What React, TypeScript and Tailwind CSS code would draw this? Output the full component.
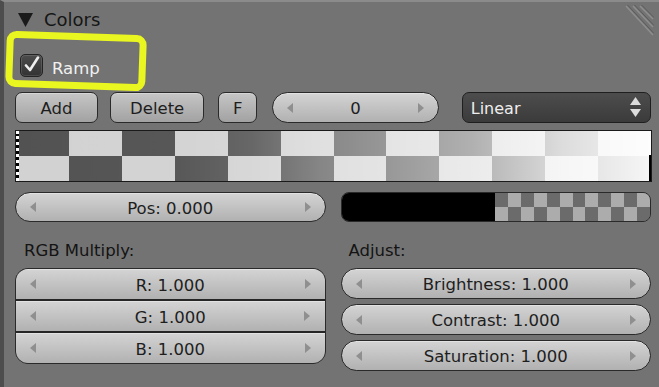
import type { ReactNode } from 'react'

const font = "font-['DejaVu_Sans','Liberation_Sans',sans-serif]"

// row-major for a 12 x 2 checker, top-left dark
const rampCells = Array.from({ length: 24 }, (_, i) => (Math.floor(i / 12) + (i % 12)) % 2 === 0)
const swatchCells = Array.from({ length: 24 }, (_, i) => (Math.floor(i / 12) + (i % 12)) % 2 === 0)

function ArrowL(): React.JSX.Element {
  return (
    <svg width="6" height="10" viewBox="0 0 6 10" className="shrink-0">
      <polygon points="6,0 0,5 6,10" fill="#8f8f8f" />
    </svg>
  )
}

function ArrowR(): React.JSX.Element {
  return (
    <svg width="6" height="10" viewBox="0 0 6 10" className="shrink-0">
      <polygon points="0,0 6,5 0,10" fill="#8f8f8f" />
    </svg>
  )
}

/** 블렌더 숫자 필드 — 양쪽 화살표 + 가운데 값 */
function NumField({ label, className }: { label: string; className: string }): React.JSX.Element {
  return (
    <div
      className={
        'flex items-center justify-between bg-gradient-to-b from-[#d4d4d4] to-[#b1b1b1] px-[14px] text-[16.5px] leading-[19px] text-[#1e1e1e] shadow-[inset_0_1px_0_rgba(255,255,255,0.35)] ' +
        className
      }
    >
      <ArrowL />
      <span className="pt-[2px]">{label}</span>
      <ArrowR />
    </div>
  )
}

function Button({ w, children }: { w: string; children: ReactNode }): React.JSX.Element {
  return (
    <div
      className={
        'flex h-[31px] items-center justify-center rounded-[7px] border border-[#2a2a2a] bg-gradient-to-b from-[#c6c6c6] to-[#a2a2a2] pt-[2px] text-[16.5px] leading-[19px] text-[#1e1e1e] shadow-[inset_0_1px_0_rgba(255,255,255,0.3)] ' +
        w
      }
    >
      {children}
    </div>
  )
}

export default function App(): React.JSX.Element {
  return (
    <div
      className={`${font} relative flex h-[387px] w-[659px] flex-col overflow-hidden border-l-4 border-t-2 border-l-[#4d4d4d] border-t-[#8b8b8b] bg-[#737373] pl-[11px] pr-[8px]`}
    >
      {/* 패널 헤더 */}
      <div className="mt-[7px] flex h-[21px] items-center">
        <svg width="15" height="14" viewBox="0 0 15 14" className="ml-[3px]">
          <polygon points="0,0 15,0 7.5,14" fill="#1a1a1a" />
        </svg>
        <span className="ml-[11px] text-[18px] leading-[21px] text-[#161616]">Colors</span>
      </div>

      {/* 리사이즈 그립 */}
      <svg width="30" height="32" viewBox="0 0 30 32" className="absolute right-[5px] top-[3px]">
        <line x1="2" y1="1" x2="29" y2="30" stroke="#8e8e8e" strokeWidth="1.5" />
        <line x1="3.5" y1="0" x2="30" y2="28.5" stroke="#5c5c5c" strokeWidth="1" />
        <line x1="9" y1="1" x2="29" y2="22" stroke="#8e8e8e" strokeWidth="1.5" />
        <line x1="10.5" y1="0" x2="30" y2="20.5" stroke="#5c5c5c" strokeWidth="1" />
        <line x1="16" y1="1" x2="29" y2="14" stroke="#8e8e8e" strokeWidth="1.5" />
        <line x1="17.5" y1="0" x2="30" y2="12.5" stroke="#5c5c5c" strokeWidth="1" />
      </svg>

      {/* 체크박스 Ramp */}
      <div className="mt-[24px] flex h-[23px] items-center">
        <div className="ml-[5px] flex size-[23px] items-center justify-center rounded-[5px] border border-[#242424] bg-gradient-to-b from-[#4c4c4c] to-[#333333] shadow-[inset_0_0_0_1px_rgba(255,255,255,0.12)]">
          <svg width="19" height="19" viewBox="0 0 19 19">
            <polyline
              points="4,9.5 8,14 16,1.5"
              fill="none"
              stroke="#efefef"
              strokeWidth="2.6"
              strokeLinecap="round"
              strokeLinejoin="round"
            />
          </svg>
        </div>
        <span className="ml-[9px] mt-[5px] text-[16.5px] leading-[19px] text-[#f1f1f1]">Ramp</span>
      </div>

      {/* 노란 강조 테두리 */}
      <div className="absolute left-[2px] top-[31px] h-[56px] w-[140px] rotate-[2deg] rounded-[10px] border-[7px] border-[#e9f61f]" />

      {/* 버튼 줄 */}
      <div className="mt-[15px] flex items-center">
        <Button w="w-[84px]">Add</Button>
        <div className="ml-[12px]">
          <Button w="w-[94px]">Delete</Button>
        </div>
        <div className="ml-[14px]">
          <Button w="w-[39px]">F</Button>
        </div>
        <NumField
          label="0"
          className="ml-[15px] h-[31px] w-[168px] rounded-full border border-[#2a2a2a]"
        />
        <div className="ml-[23px] flex h-[31px] w-[191px] items-center justify-between rounded-[7px] border border-[#1f1f1f] bg-gradient-to-b from-[#4d4d4d] to-[#3b3b3b] pl-[8px] pr-[9px] text-[16px] leading-[19px] text-[#eeeeee]">
          <span className="pt-[2px]">Linear</span>
          <svg width="11" height="21" viewBox="0 0 11 21">
            <polygon points="5.5,0 11,8 0,8" fill="#dcdcdc" />
            <polygon points="0,12 11,12 5.5,20" fill="#dcdcdc" />
          </svg>
        </div>
      </div>

      {/* 컬러 램프 */}
      <div className="relative mt-[7px] h-[52px] w-[637px] border border-[#1a1a1a]">
        <div className="grid h-full grid-cols-12 grid-rows-2">
          {rampCells.map((dark, i) => (
            <div key={i} className={dark ? 'bg-[#525252]' : 'bg-[#d2d2d2]'} />
          ))}
        </div>
        <div className="absolute inset-0 bg-[linear-gradient(to_right,rgba(255,255,255,0)_0%,rgba(255,255,255,0.03)_25%,rgba(255,255,255,0.12)_37%,rgba(255,255,255,0.3)_48%,rgba(255,255,255,0.42)_60%,rgba(255,255,255,0.55)_72%,rgba(255,255,255,0.8)_86%,rgba(255,255,255,0.95)_100%)]" />
        <div className="absolute bottom-0 left-0 top-0 w-[3px] border-l-[3px] border-dotted border-l-white bg-black" />
        <div className="absolute bottom-0 right-0 top-[24px] w-[2px] bg-black" />
      </div>

      {/* Pos + 색상 견본 */}
      <div className="mt-[10px] grid h-[30px] grid-cols-2 gap-[15px]">
        <NumField label="Pos: 0.000" className="h-[30px] rounded-full border border-[#2a2a2a]" />
        <div className="flex h-[30px] overflow-hidden rounded-[8px] border border-[#2a2a2a]">
          <div className="flex-1 bg-black" />
          <div className="grid w-[155px] grid-cols-12 grid-rows-2">
            {swatchCells.map((dark, i) => (
              <div key={i} className={dark ? 'bg-[#6b6b6b]' : 'bg-[#acacac]'} />
            ))}
          </div>
        </div>
      </div>

      {/* RGB Multiply / Adjust */}
      <div className="mt-[19px] grid grid-cols-2 gap-[15px]">
        <div className="flex flex-col">
          <span className="pl-[9px] text-[16.5px] leading-[19px] text-[#141414]">RGB Multiply:</span>
          <div className="mt-[8px] flex flex-col overflow-hidden rounded-[13px] border border-[#2a2a2a] bg-[#262626]">
            <NumField label="R: 1.000" className="h-[30px]" />
            <NumField label="G: 1.000" className="mt-[2px] h-[30px]" />
            <NumField label="B: 1.000" className="mt-[2px] h-[30px]" />
          </div>
        </div>
        <div className="flex flex-col">
          <span className="pl-[8px] text-[16.5px] leading-[19px] text-[#141414]">Adjust:</span>
          <div className="mt-[8px] flex flex-col gap-[5px]">
            <NumField label="Brightness: 1.000" className="h-[31px] rounded-full border border-[#2a2a2a]" />
            <NumField label="Contrast: 1.000" className="h-[31px] rounded-full border border-[#2a2a2a]" />
            <NumField label="Saturation: 1.000" className="h-[31px] rounded-full border border-[#2a2a2a]" />
          </div>
        </div>
      </div>
    </div>
  )
}
